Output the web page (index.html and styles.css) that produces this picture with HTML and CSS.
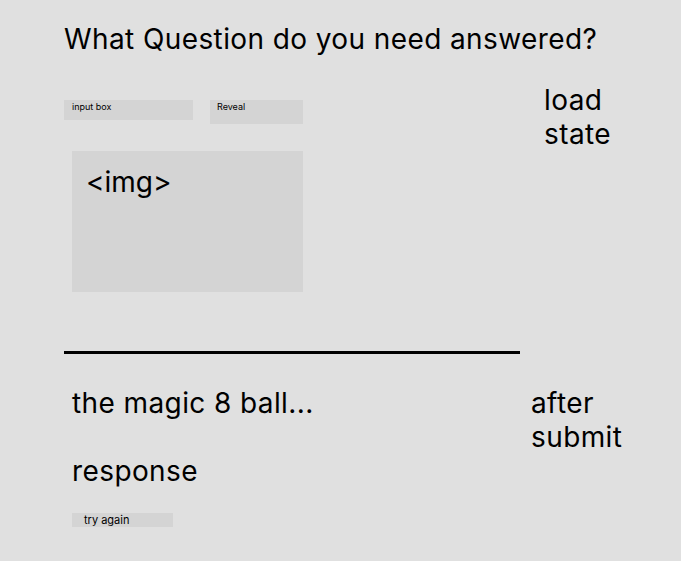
FILE: index.html
```html
<!DOCTYPE html>
<html lang="en">
<head>
  <meta charset="UTF-8" />
  <meta name="viewport" content="width=device-width, initial-scale=1.0" />
  <title>Magic 8 Ball - Wireframe</title>
  <link rel="stylesheet" href="styles.css">
</head>
<body>
  <div class="canvas">
    <!-- Load state -->
    <h1 class="title">What Question do you need answered?</h1>
    <div class="frame">
      <div class="frame-main">
        <div class="controls">
          <div class="input-box">input box</div>
          <div class="reveal-btn">Reveal</div>
        </div>
        <div class="img-box">&lt;img&gt;</div>
      </div>
      <div class="note">load<br>state</div>
    </div>

    <div class="divider"></div>

    <!-- After submit -->
    <div class="frame frame-after">
      <div class="frame-main result">
        <p class="big-text">the magic 8 ball...</p>
        <p class="big-text response">response</p>
        <div class="again-btn">try again</div>
      </div>
      <div class="note">after<br>submit</div>
    </div>
  </div>
</body>
</html>
```

FILE: styles.css
```css
/* Base */
* {
  margin: 0;
  padding: 0;
  box-sizing: border-box;
}
body {
  background-color: #e0e0e0;
  color: #000;
  font-family: Inter, "Noto Sans", sans-serif;
  min-height: 100vh;
}
.canvas {
  padding: 22px 0 0 64px;
}
/* Heading */
.title {
  font-size: 28px;
  font-weight: 400;
  line-height: 34px;
  letter-spacing: 0.4px;
}
/* Frames with note on the right */
.frame {
  display: grid;
  grid-template-columns: 480px auto;
  margin-top: 27px;
}
.frame-main {
  padding-top: 17px;
}
.note {
  font-size: 28px;
  line-height: 34px;
  letter-spacing: 0.4px;
}
/* Controls */
.controls {
  display: flex;
  align-items: flex-start;
  gap: 17px;
}
.input-box,
.reveal-btn {
  background: #d4d4d4;
  font-size: 9px;
  line-height: 12px;
  padding-top: 1px;
}
.input-box {
  width: 129px;
  height: 20px;
  padding-left: 8px;
}
.reveal-btn {
  width: 93px;
  height: 24px;
  padding-left: 7px;
}
.img-box {
  width: 231px;
  height: 141px;
  margin: 27px 0 0 8px;
  background: #d4d4d4;
  font-size: 28px;
  line-height: 34px;
  padding: 14px 0 0 14px;
}
/* Divider */
.divider {
  width: 456px;
  height: 3px;
  background: #000;
  margin-top: 59px;
}
/* After submit */
.frame-after {
  grid-template-columns: 467px auto;
  margin-top: 32px;
}
.result {
  padding: 0 0 0 8px;
}
.big-text {
  font-size: 28px;
  line-height: 34px;
  letter-spacing: 0.4px;
}
.response {
  margin-top: 34px;
}
.again-btn {
  width: 101px;
  height: 14px;
  margin-top: 25px;
  background: #d4d4d4;
  font-size: 11px;
  line-height: 14px;
  padding-left: 12px;
}
```
